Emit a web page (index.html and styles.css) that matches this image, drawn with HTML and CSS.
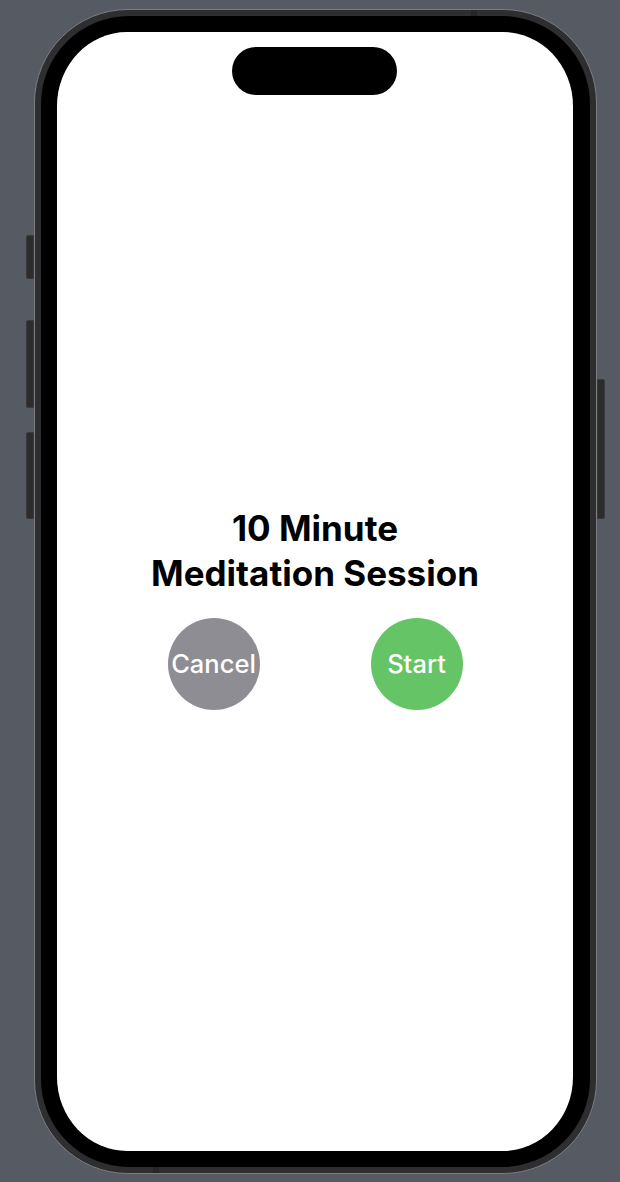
FILE: index.html
```html
<!DOCTYPE html>
<html lang="en">
<head>
<meta charset="utf-8">
<title>10 Minute Meditation Session</title>
<link rel="stylesheet" href="styles.css">
</head>
<body>
  <div class="stage">
    <div class="phone">
      <span class="side-btn action"></span>
      <span class="side-btn vol-up"></span>
      <span class="side-btn vol-down"></span>
      <span class="side-btn power"></span>
      <span class="antenna a-top"></span>
      <span class="antenna a-bottom"></span>
      <div class="bezel">
        <div class="screen">
          <div class="island"></div>
          <div class="session">
            <h1 class="title">10 Minute<br>Meditation Session</h1>
            <div class="actions">
              <button class="circle-btn cancel" type="button">Cancel</button>
              <button class="circle-btn start" type="button">Start</button>
            </div>
          </div>
        </div>
      </div>
    </div>
  </div>
</body>
</html>
```

FILE: styles.css
```css
* {
  box-sizing: border-box;
}

html, body {
  margin: 0;
  padding: 0;
}

body {
  background: #565b63;
  width: 620px;
  height: 1182px;
  overflow: hidden;
  font-family: Inter, "Noto Sans", "Liberation Sans", sans-serif;
}

.stage {
  padding: 9px 0 0 34px;
}

.phone {
  position: relative;
  width: 563px;
  height: 1165px;
  border-radius: 94px;
  background: #2e2e30;
  border: 1px solid #7c7d80;
  padding: 6px;
}

.side-btn {
  position: absolute;
  width: 8px;
  background: #2c2c2d;
  border: 1px solid #3a3a3c;
}

.action {
  left: -9px;
  top: 225px;
  height: 44px;
  border-radius: 2px 0 0 2px;
}

.vol-up {
  left: -9px;
  top: 310px;
  height: 88px;
  border-radius: 2px 0 0 2px;
}

.vol-down {
  left: -9px;
  top: 422px;
  height: 87px;
  border-radius: 2px 0 0 2px;
}

.power {
  right: -9px;
  top: 369px;
  height: 140px;
  border-radius: 0 2px 2px 0;
}

.antenna {
  position: absolute;
  background: #262628;
  width: 6px;
  height: 6px;
}

.a-top {
  top: 0;
  left: 436px;
}

.a-bottom {
  bottom: 0;
  left: 118px;
}

.bezel {
  width: 100%;
  height: 100%;
  background: #000;
  border-radius: 88px;
  padding: 16px 17px 16px 16px;
}

.screen {
  position: relative;
  width: 100%;
  height: 100%;
  background: #fff;
  border-radius: 70px / 74px;
  display: flex;
  flex-direction: column;
  align-items: center;
  justify-content: center;
  padding-top: 32px;
}

.island {
  position: absolute;
  top: 15px;
  left: 50%;
  width: 165px;
  height: 48px;
  margin-left: -83px;
  border-radius: 24px;
  background: #000;
}

.session {
  display: flex;
  flex-direction: column;
  align-items: center;
  gap: 22px;
}

.title {
  margin: 0;
  font-size: 35px;
  font-weight: 700;
  line-height: 45px;
  text-align: center;
  color: #000;
  letter-spacing: 0;
}

.actions {
  display: flex;
  gap: 111px;
}

.circle-btn {
  width: 92px;
  height: 92px;
  border-radius: 50%;
  border: none;
  padding: 0;
  display: flex;
  align-items: center;
  justify-content: center;
  font-family: Inter, "Noto Sans", "Liberation Sans", sans-serif;
  font-size: 25.5px;
  font-weight: 500;
  color: #fff;
  white-space: nowrap;
  overflow: visible;
}

.cancel {
  background: #8e8d93;
}

.start {
  background: #65c466;
}
```
